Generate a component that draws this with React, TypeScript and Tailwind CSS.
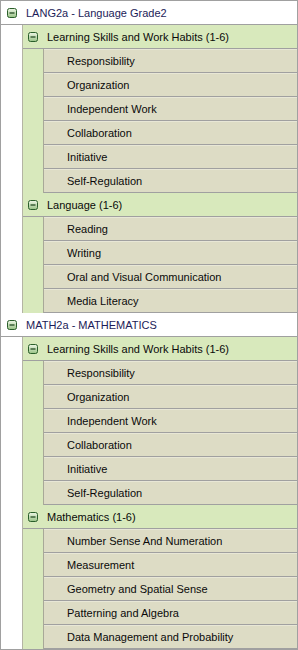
const groups = [
  {
    title: 'LANG2a - Language Grade2',
    sections: [
      {
        title: 'Learning Skills and Work Habits (1-6)',
        items: ['Responsibility', 'Organization', 'Independent Work', 'Collaboration', 'Initiative', 'Self-Regulation'],
      },
      {
        title: 'Language (1-6)',
        items: ['Reading', 'Writing', 'Oral and Visual Communication', 'Media Literacy'],
      },
    ],
  },
  {
    title: 'MATH2a - MATHEMATICS',
    sections: [
      {
        title: 'Learning Skills and Work Habits (1-6)',
        items: ['Responsibility', 'Organization', 'Independent Work', 'Collaboration', 'Initiative', 'Self-Regulation'],
      },
      {
        title: 'Mathematics (1-6)',
        items: [
          'Number Sense And Numeration',
          'Measurement',
          'Geometry and Spatial Sense',
          'Patterning and Algebra',
          'Data Management and Probability',
        ],
      },
    ],
  },
];

function MinusBox() {
  return (
    <svg width="10" height="10" viewBox="0 0 10 10" className="shrink-0">
      <defs>
        <linearGradient id="mb" x1="0" y1="0" x2="0" y2="1">
          <stop offset="0" stopColor="#eef6e6" />
          <stop offset="1" stopColor="#98c285" />
        </linearGradient>
      </defs>
      <rect x="0.5" y="0.5" width="9" height="9" rx="2" fill="url(#mb)" stroke="#2a5f2a" />
      <line x1="2.5" y1="5" x2="7.5" y2="5" stroke="#163f16" strokeWidth="1.2" />
    </svg>
  );
}

export default function App() {
  return (
    <div
      className="w-[298px] border border-[#a0a0a0] bg-white text-[11px] text-[#0a0a0a]"
      style={{ fontFamily: '"Liberation Sans", Arial, sans-serif' }}
    >
      {groups.map((g) => (
        <div key={g.title}>
          {/* top level course row */}
          <div className="flex h-6 items-center gap-[9px] border-b border-[#a0a0a0] pl-[6px] pt-px text-[#1c1c58]">
            <MinusBox />
            <span>{g.title}</span>
          </div>
          <div className="ml-[21px] border-l border-[#b4b4a4] bg-[#d8e9bc]">
            {g.sections.map((s) => (
              <div key={s.title}>
                <div className="flex h-6 items-center gap-[9px] border-b border-[#a0a0a0] pl-[5px] pt-px">
                  <MinusBox />
                  <span>{s.title}</span>
                </div>
                <div className="ml-[20px] border-l border-[#a8a898]">
                  {s.items.map((it) => (
                    <div
                      key={it}
                      className="flex h-6 items-center border-t border-b border-t-[#e8e7d6] border-b-[#a0a0a0] bg-[#dddcc5] pl-[23px]"
                    >
                      {it}
                    </div>
                  ))}
                </div>
              </div>
            ))}
          </div>
        </div>
      ))}
    </div>
  );
}
